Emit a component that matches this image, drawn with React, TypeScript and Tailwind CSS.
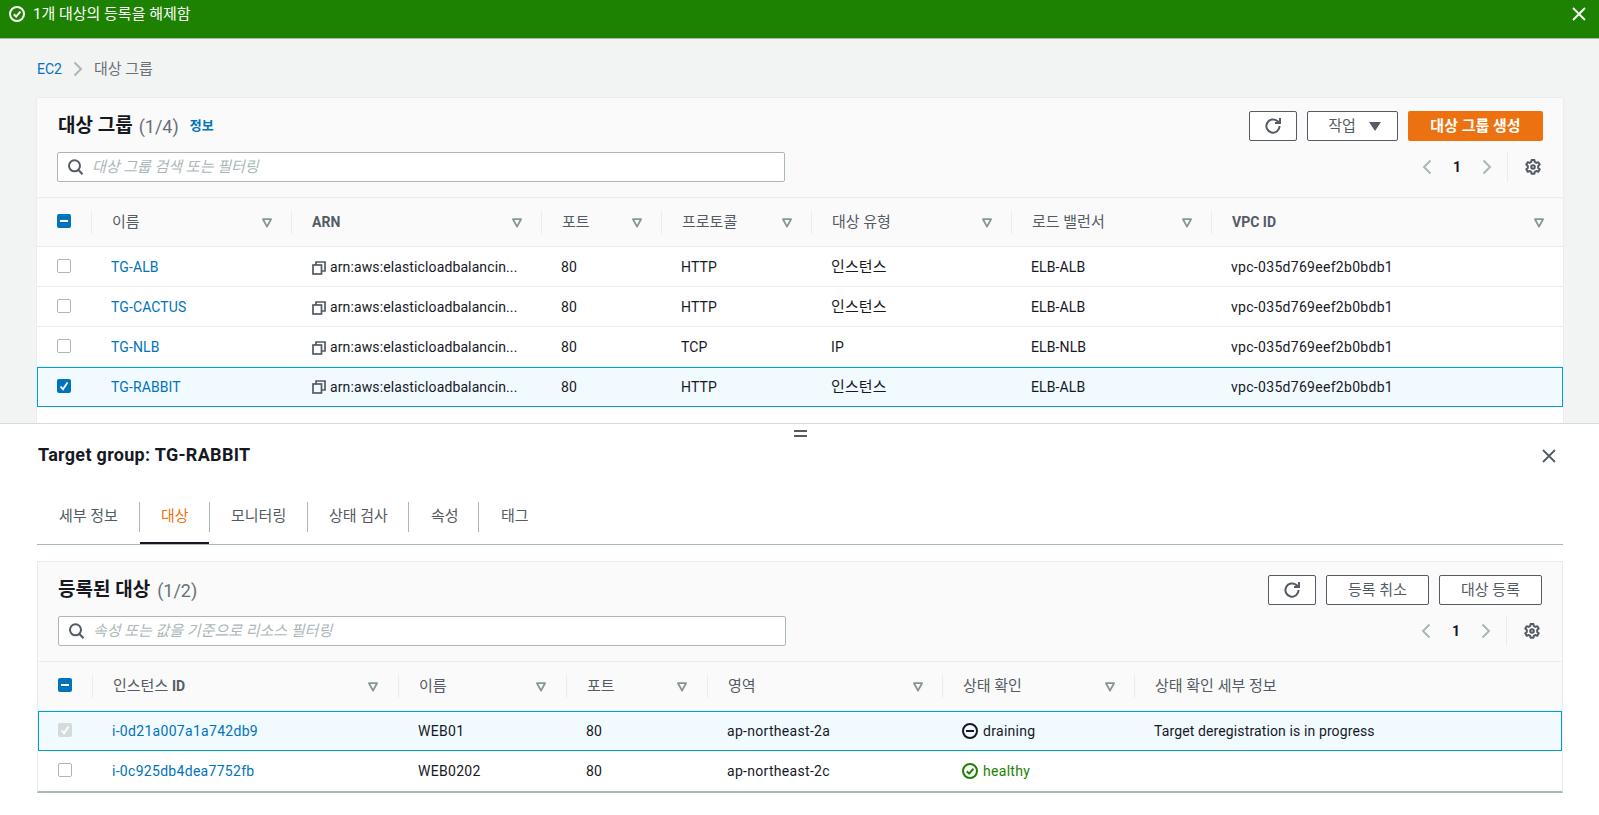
import React from "react";

const FONT = "[font-family:'Roboto','Noto_Sans_CJK_KR',sans-serif]";

function CheckCircle({ color, size = 16 }: { color: string; size?: number }) {
  return (
    <svg width={size} height={size} viewBox="0 0 16 16" fill="none" stroke={color} strokeWidth="2">
      <circle cx="8" cy="8" r="7" />
      <path d="M4.8 8.2 7.2 10.6 11.4 5.6" />
    </svg>
  );
}
function MinusCircle() {
  return (
    <svg width="16" height="16" viewBox="0 0 16 16" fill="none" stroke="#16191f" strokeWidth="2">
      <circle cx="8" cy="8" r="7" />
      <path d="M4 8h8" />
    </svg>
  );
}
function CloseX({ color, size = 14 }: { color: string; size?: number }) {
  return (
    <svg width={size} height={size} viewBox="0 0 14 14" fill="none" stroke={color} strokeWidth="1.8">
      <path d="M1 1 13 13M13 1 1 13" />
    </svg>
  );
}
function Chevron({ dir, color }: { dir: "l" | "r"; color: string }) {
  return (
    <svg width="10" height="16" viewBox="0 0 10 16" fill="none" stroke={color} strokeWidth="2">
      <path d={dir === "l" ? "M8.5 1.5 2 8l6.5 6.5" : "M1.5 1.5 8 8l-6.5 6.5"} />
    </svg>
  );
}
function Refresh() {
  return (
    <svg width="18" height="18" viewBox="0 0 18 18" fill="none" stroke="#545b64" strokeWidth="2">
      <path d="M15.6 9a6.6 6.6 0 1 1-2.2-4.9L15.6 6" />
      <path d="M16 1v5h-5" />
    </svg>
  );
}
function Gear() {
  return (
    <svg width="16" height="16" viewBox="0 0 16 16" fill="none" stroke="#545b64" strokeWidth="2">
      <path d="M6.6 1h2.8l.4 2 1.5.9 2-.7 1.4 2.4-1.5 1.4v1.9l1.5 1.3-1.4 2.5-2-.7-1.5.9-.4 1.8H6.6l-.4-1.8-1.5-.9-2 .7-1.4-2.5 1.5-1.3V7L1.3 5.6l1.4-2.4 2 .7 1.5-.9z" strokeLinejoin="round" />
      <circle cx="8" cy="8" r="1.8" />
    </svg>
  );
}
function Search() {
  return (
    <svg width="15" height="16" viewBox="0 0 15 16" fill="none" stroke="#545b64" strokeWidth="2">
      <circle cx="6.5" cy="6.8" r="5.5" />
      <path d="M10.5 11l4 4.2" />
    </svg>
  );
}
function FilterIcon() {
  return (
    <svg width="10" height="10" viewBox="0 0 10 10" fill="none" stroke="#879596" strokeWidth="1.8" className="mt-[1px]">
      <path d="M1 1.2h8L5 8.6z" strokeLinejoin="round" />
    </svg>
  );
}
function Copy() {
  return (
    <svg width="14" height="14" viewBox="0 0 14 14" fill="none" stroke="#545b64" strokeWidth="1.7" className="shrink-0 ml-[1px]">
      <rect x="1" y="4" width="8.5" height="9" />
      <path d="M4 4V1h9v9h-3.5" />
    </svg>
  );
}

type Box = "none" | "checked" | "mixed" | "disabled";
function CheckBox({ state }: { state: Box }) {
  const cls =
    state === "none"
      ? "bg-white border border-[#aab7b8]"
      : state === "disabled"
        ? "bg-[#d5dbdb]"
        : "bg-[#0073bb]";
  return (
    <div className={`w-[14px] h-[14px] mb-[2px] rounded-[2px] flex items-center justify-center ${cls}`}>
      {state === "mixed" && <div className="w-[8px] h-[2px] bg-white" />}
      {(state === "checked" || state === "disabled") && (
        <svg width="10" height="10" viewBox="0 0 10 10" fill="none" stroke="white" strokeWidth="1.8">
          <path d="M1.5 5.5 4 8.2 8.5 1.5" />
        </svg>
      )}
    </div>
  );
}

function Btn({ w, children, primary }: { w: string; children: React.ReactNode; primary?: boolean }) {
  return (
    <div
      className={`${w} h-[30px] rounded-[2px] flex items-center justify-center text-[15px] ${
        primary ? "bg-[#ec7211] text-white font-bold" : "bg-white border border-[#545b64] text-[#545b64]"
      }`}
    >
      {children}
    </div>
  );
}

function SearchRow({ placeholder }: { placeholder: string }) {
  return (
    <div className="flex items-center justify-between h-[30px]">
      <div className="w-[728px] h-[30px] bg-white border border-[#aab7b8] rounded-[2px] flex items-center pl-[10px] gap-[9px]">
        <Search />
        <span className="text-[15px] italic text-[#aab7b8]">{placeholder}</span>
      </div>
      <div className="flex items-center h-[30px]">
        <div className="w-[30px] flex justify-center"><Chevron dir="l" color="#aab7b8" /></div>
        <div className="w-[30px] text-center text-[14px] font-bold text-[#16191f]">1</div>
        <div className="w-[30px] flex justify-center"><Chevron dir="r" color="#aab7b8" /></div>
        <div className="ml-[5px] w-px h-[30px] bg-[#eaeded]" />
        <div className="ml-[15px] w-[20px] flex justify-center"><Gear /></div>
      </div>
    </div>
  );
}

function HeaderRow({ cols }: { cols: { w: number; label: React.ReactNode; filter?: boolean; pr?: string }[] }) {
  return (
    <div className="flex h-[50px] items-center border-y border-[#eaeded]">
      <div className="w-[54px] shrink-0 pl-[20px]"><CheckBox state="mixed" /></div>
      {cols.map((c, i) => (
        <div
          key={i}
          style={{ width: c.w, flexGrow: i === cols.length - 1 ? 1 : 0 }}
          className={`shrink-0 h-[23px] border-l border-[#eaeded] pl-[20px] ${c.pr ?? "pr-[19px]"} flex items-center justify-between text-[15px] text-[#545b64]`}
        >
          <span>{c.label}</span>
          {c.filter !== false && <FilterIcon />}
        </div>
      ))}
    </div>
  );
}

function Row({
  box,
  widths,
  cells,
  selected,
  last,
}: {
  box: Box;
  widths: number[];
  cells: React.ReactNode[];
  selected?: boolean;
  last?: boolean;
}) {
  const nudged = !selected && !last;
  return (
    <div
      className={`flex items-center h-[40px] text-[14px] tracking-[0.12px] text-[#16191f] ${
        selected ? "bg-[#f1faff] border border-[#00a1c9]" : last ? "bg-white" : "bg-white border-b border-[#eaeded]"
      }`}
    >
      <div className={`${selected ? "w-[53px] pl-[19px]" : "w-[54px] pl-[20px]"} shrink-0`}>
        <CheckBox state={box} />
      </div>
      {cells.map((c, i) => (
        <div key={i} style={{ width: widths[i] }} className={`shrink-0 pl-[20px] whitespace-nowrap ${nudged ? "pt-[2px]" : ""}`}>
          {c}
        </div>
      ))}
    </div>
  );
}

function Link({ children }: { children: React.ReactNode }) {
  return <span className="text-[#0073bb]">{children}</span>;
}
function Wide({ children }: { children: React.ReactNode }) {
  return <span className="tracking-[0.3px]">{children}</span>;
}

const topWidths = [200, 250, 120, 150, 200, 200, 352];
const topRows = [
  ["TG-ALB", "80", "HTTP", "인스턴스", "ELB-ALB"],
  ["TG-CACTUS", "80", "HTTP", "인스턴스", "ELB-ALB"],
  ["TG-NLB", "80", "TCP", "IP", "ELB-NLB"],
  ["TG-RABBIT", "80", "HTTP", "인스턴스", "ELB-ALB"],
];
const botWidths = [306, 168, 141, 235, 192, 382];

const tabs = [
  { label: "세부 정보", w: "w-[103px]", pl: "pl-[22px]" },
  { label: "대상", w: "w-[70px]", pl: "pl-[21px]", active: true },
  { label: "모니터링", w: "w-[98px]", pl: "pl-[21px]" },
  { label: "상태 검사", w: "w-[101px]", pl: "pl-[21px]" },
  { label: "속성", w: "w-[70px]", pl: "pl-[22px]" },
  { label: "태그", w: "w-[70px]", pl: "pl-[22px]", last: true },
];

export default function App() {
  return (
    <div className={`${FONT} w-[1599px] h-[815px] overflow-hidden flex flex-col bg-white`}>
      {/* flash banner */}
      <div className="h-[39px] shrink-0 bg-[#1d8102] border-b border-[#aab7b8] flex justify-between pl-[9px] pr-[13px] pt-[5px] text-white text-[15px]">
        <div className="flex items-center gap-[8px] h-[18px]">
          <CheckCircle color="white" />
          <span>1개 대상의 등록을 해제함</span>
        </div>
        <div className="h-[18px] flex items-center"><CloseX color="white" /></div>
      </div>

      {/* main */}
      <div className="h-[384px] shrink-0 overflow-hidden bg-[#f2f3f3] pl-[36px] pr-[35px]">
        <div className="h-[58px] pl-[1px] pt-[2px] flex items-center gap-[11px] text-[15px] text-[#687078]">
          <span className="text-[14px] text-[#0073bb]">EC2</span>
          <Chevron dir="r" color="#aab7b8" />
          <span>대상 그룹</span>
        </div>
        <div className="bg-white border border-[#eaeded] h-[400px]">
          <div className="bg-[#fafafa] pl-[21px] pr-[20px] pt-[13px] pb-[15px]">
            <div className="flex items-center justify-between h-[30px] mb-[11px]">
              <div className="flex items-center">
                <span className="text-[19px] font-bold text-[#16191f]">대상 그룹</span>
                <span className="text-[18px] text-[#687078] ml-[6px]">(1/4)</span>
                <span className="text-[13px] font-bold text-[#0073bb] ml-[11px]">정보</span>
              </div>
              <div className="flex items-center gap-[10px]">
                <Btn w="w-[48px]"><Refresh /></Btn>
                <Btn w="w-[91px]">
                  <div className="pl-[4px] flex items-center">
                    <span>작업</span>
                    <svg width="12" height="9" viewBox="0 0 12 9" className="ml-[13px]" fill="#545b64"><path d="M0 0h12L6 9z" /></svg>
                  </div>
                </Btn>
                <Btn w="w-[135px]" primary>대상 그룹 생성</Btn>
              </div>
            </div>
            <div className="-ml-[1px]"><SearchRow placeholder="대상 그룹 검색 또는 필터링" /></div>
          </div>
          <div className="bg-[#fafafa]">
            <HeaderRow
              cols={[
                { w: 200, label: "이름" },
                { w: 250, label: <b className="font-bold text-[14px]">ARN</b> },
                { w: 120, label: "포트" },
                { w: 150, label: "프로토콜" },
                { w: 200, label: "대상 유형" },
                { w: 200, label: "로드 밸런서" },
                { w: 352, label: <b className="font-bold text-[14px]">VPC ID</b> },
              ]}
            />
          </div>
          {topRows.map((r, i) => (
            <Row
              key={r[0]}
              box={i === 3 ? "checked" : "none"}
              selected={i === 3}
              widths={topWidths}
              cells={[
                <Link>{r[0]}</Link>,
                <div className="flex items-center gap-[4px]">
                  <Copy />
                  <span>arn:aws:elasticloadbalancin...</span>
                </div>,
                r[1],
                r[2],
                r[3] === "인스턴스" ? <span className="text-[15px]">{r[3]}</span> : r[3],
                r[4],
                <Wide>vpc-035d769eef2b0bdb1</Wide>,
              ]}
            />
          ))}
        </div>
      </div>

      {/* split panel */}
      <div className="flex-1 bg-white border-t border-[#d5dbdb] pl-[37px] pr-[36px]">
        <div className="flex flex-col items-center gap-[3px] pt-[6px] h-[20px]">
          <div className="w-[13px] h-[2px] bg-[#545b64]" />
          <div className="w-[13px] h-[2px] bg-[#545b64]" />
        </div>
        <div className="flex items-center justify-between h-[22px]">
          <span className="ml-[1px] text-[18px] font-bold tracking-[0.3px] text-[#16191f] leading-[22px]">Target group: TG-RABBIT</span>
          <span className="mr-[7px] mt-[2px]"><CloseX color="#545b64" /></span>
        </div>
        <div className="mt-[24px] flex h-[55px] border-b border-[#aab7b8]">
          {tabs.map((t) => (
            <div key={t.label} className={`${t.w} relative flex items-center h-[54px]`}>
              <div
                className={`h-[30px] w-full flex items-center pb-[2px] ${t.pl} text-[15px] ${t.last ? "" : "border-r border-[#aab7b8]"} ${
                  t.active ? "text-[#ec7211]" : "text-[#545b64]"
                }`}
              >
                {t.label}
              </div>
              {t.active && <div className="absolute left-0 right-[1px] bottom-0 h-[2px] bg-[#16191f]" />}
            </div>
          ))}
        </div>
        <div className="mt-[16px] border border-[#eaeded] border-b-2 border-b-[#aab7b8]">
          <div className="bg-[#fafafa] px-[20px] pt-[13px] pb-[15px]">
            <div className="flex items-center justify-between h-[30px] mb-[11px]">
              <div className="flex items-center">
                <span className="text-[19px] font-bold text-[#16191f]">등록된 대상</span>
                <span className="text-[18px] text-[#687078] ml-[7px]">(1/2)</span>
              </div>
              <div className="flex items-center gap-[10px]">
                <Btn w="w-[48px]"><Refresh /></Btn>
                <Btn w="w-[103px]">등록 취소</Btn>
                <Btn w="w-[103px]">대상 등록</Btn>
              </div>
            </div>
            <SearchRow placeholder="속성 또는 값을 기준으로 리소스 필터링" />
          </div>
          <div className="bg-[#fafafa]">
            <HeaderRow
              cols={[
                { w: 306, label: <>인스턴스 <b className="font-bold text-[14px]">ID</b></>, pr: "pr-[20px]" },
                { w: 168, label: "이름", pr: "pr-[20px]" },
                { w: 141, label: "포트", pr: "pr-[20px]" },
                { w: 235, label: "영역" },
                { w: 192, label: "상태 확인" },
                { w: 382, label: "상태 확인 세부 정보", filter: false },
              ]}
            />
          </div>
          <Row
            box="disabled"
            selected
            widths={botWidths}
            cells={[
              <Wide><Link>i-0d21a007a1a742db9</Link></Wide>,
              <Wide>WEB01</Wide>,
              "80",
              <Wide>ap-northeast-2a</Wide>,
              <div className="flex items-center gap-[5px]">
                <MinusCircle />
                <Wide>draining</Wide>
              </div>,
              "Target deregistration is in progress",
            ]}
          />
          <Row
            box="none"
            last
            widths={botWidths}
            cells={[
              <Wide><Link>i-0c925db4dea7752fb</Link></Wide>,
              <Wide>WEB0202</Wide>,
              "80",
              <Wide>ap-northeast-2c</Wide>,
              <div className="flex items-center gap-[5px] text-[#1d8102]">
                <CheckCircle color="#1d8102" />
                <Wide>healthy</Wide>
              </div>,
              "",
            ]}
          />
        </div>
      </div>
    </div>
  );
}
